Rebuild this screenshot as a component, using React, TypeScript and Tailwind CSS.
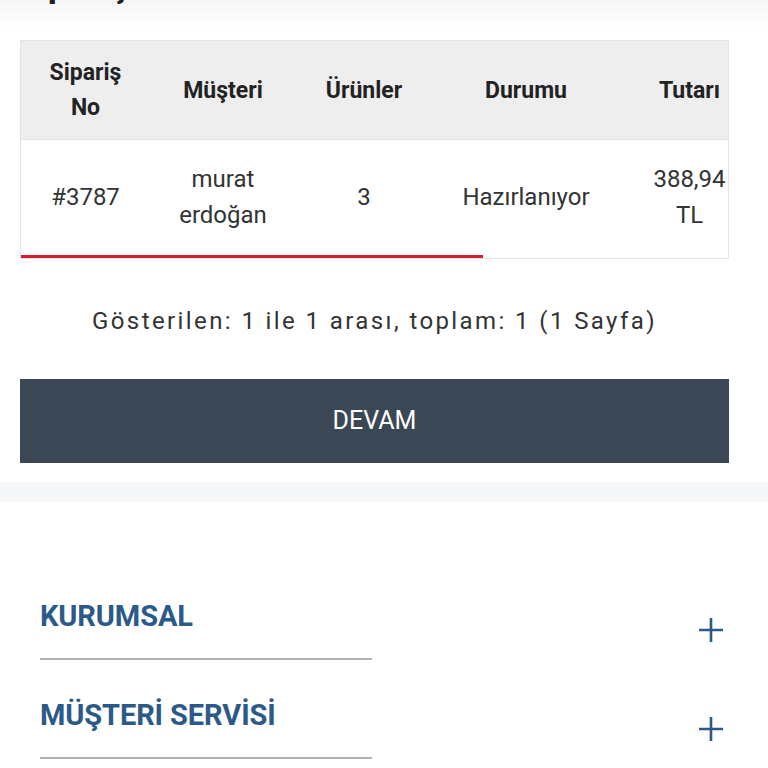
import React from "react";

const font = { fontFamily: "Roboto, 'Noto Sans', Arial, sans-serif" };

const columns = ["Sipariş No", "Müşteri", "Ürünler", "Durumu", "Tutarı"];

function Plus() {
  return (
    <svg width="26" height="26" viewBox="0 0 26 26" className="text-[#2b5a88]">
      <path d="M13 1v24M1 13h24" stroke="currentColor" strokeWidth="2.6" />
    </svg>
  );
}

function FooterRow({ title }: { title: string }) {
  return (
    <div className="flex items-center justify-between pl-[40px] pr-[44px]">
      <div className="w-[332px] border-b-2 border-[#aeb3b8] pb-[25px]">
        <span className="block text-[29px] font-bold leading-[34px] text-[#2b5a88] tracking-[-0.1px]">
          {title}
        </span>
      </div>
      <Plus />
    </div>
  );
}

export default function App() {
  return (
    <div className="bg-white min-h-screen text-[#333]" style={font}>
      <div className="h-[30px] overflow-hidden bg-gradient-to-b from-[#f6f6f6] to-white pl-[16px]">
        <h1 className="mt-[-34px] text-[36px] font-bold leading-none text-[#222]">
          Siparişlerim
        </h1>
      </div>

      <div className="pt-[10px]">
        <div className="relative ml-[20px] w-[709px] overflow-hidden border border-[#e3e3e3]">
          <div className="w-[738px]">
            <div className="grid grid-cols-[129px_146px_136px_188px_139px] h-[99px] items-center bg-[#eeeeee] border-b border-[#e2e2e2] text-[23px] font-bold leading-[35px] text-[#222] text-center">
              <div>
                Sipariş
                <br />
                No
              </div>
              <div>{columns[1]}</div>
              <div>{columns[2]}</div>
              <div>{columns[3]}</div>
              <div>{columns[4]}</div>
            </div>
            <div className="grid grid-cols-[129px_146px_136px_188px_139px] h-[118px] items-center text-[24px] leading-[36px] text-center pb-[4px]">
              <div>#3787</div>
              <div>
                murat
                <br />
                erdoğan
              </div>
              <div>3</div>
              <div>Hazırlanıyor</div>
              <div>
                388,94
                <br />
                TL
              </div>
            </div>
          </div>
          <div className="absolute bottom-0 left-0 h-[3px] w-[462px] bg-[#d3202f]" />
        </div>
      </div>

      <p className="mt-[44px] text-center text-[24px] leading-[36px] tracking-[2.4px] text-[#333] pr-[19px]">
        Gösterilen: 1 ile 1 arası, toplam: 1 (1 Sayfa)
      </p>

      <div className="mt-[40px] pl-[20px]">
        <button className="flex h-[84px] w-[709px] items-center justify-center bg-[#3b4755] text-[25px] text-white">
          DEVAM
        </button>
      </div>

      <div className="mt-[19px] h-[20px] bg-[#f6f7f9]" />

      <footer className="flex flex-col gap-[38px] pt-[97px] pb-[40px]">
        <FooterRow title="KURUMSAL" />
        <FooterRow title="MÜŞTERİ SERVİSİ" />
      </footer>
    </div>
  );
}
